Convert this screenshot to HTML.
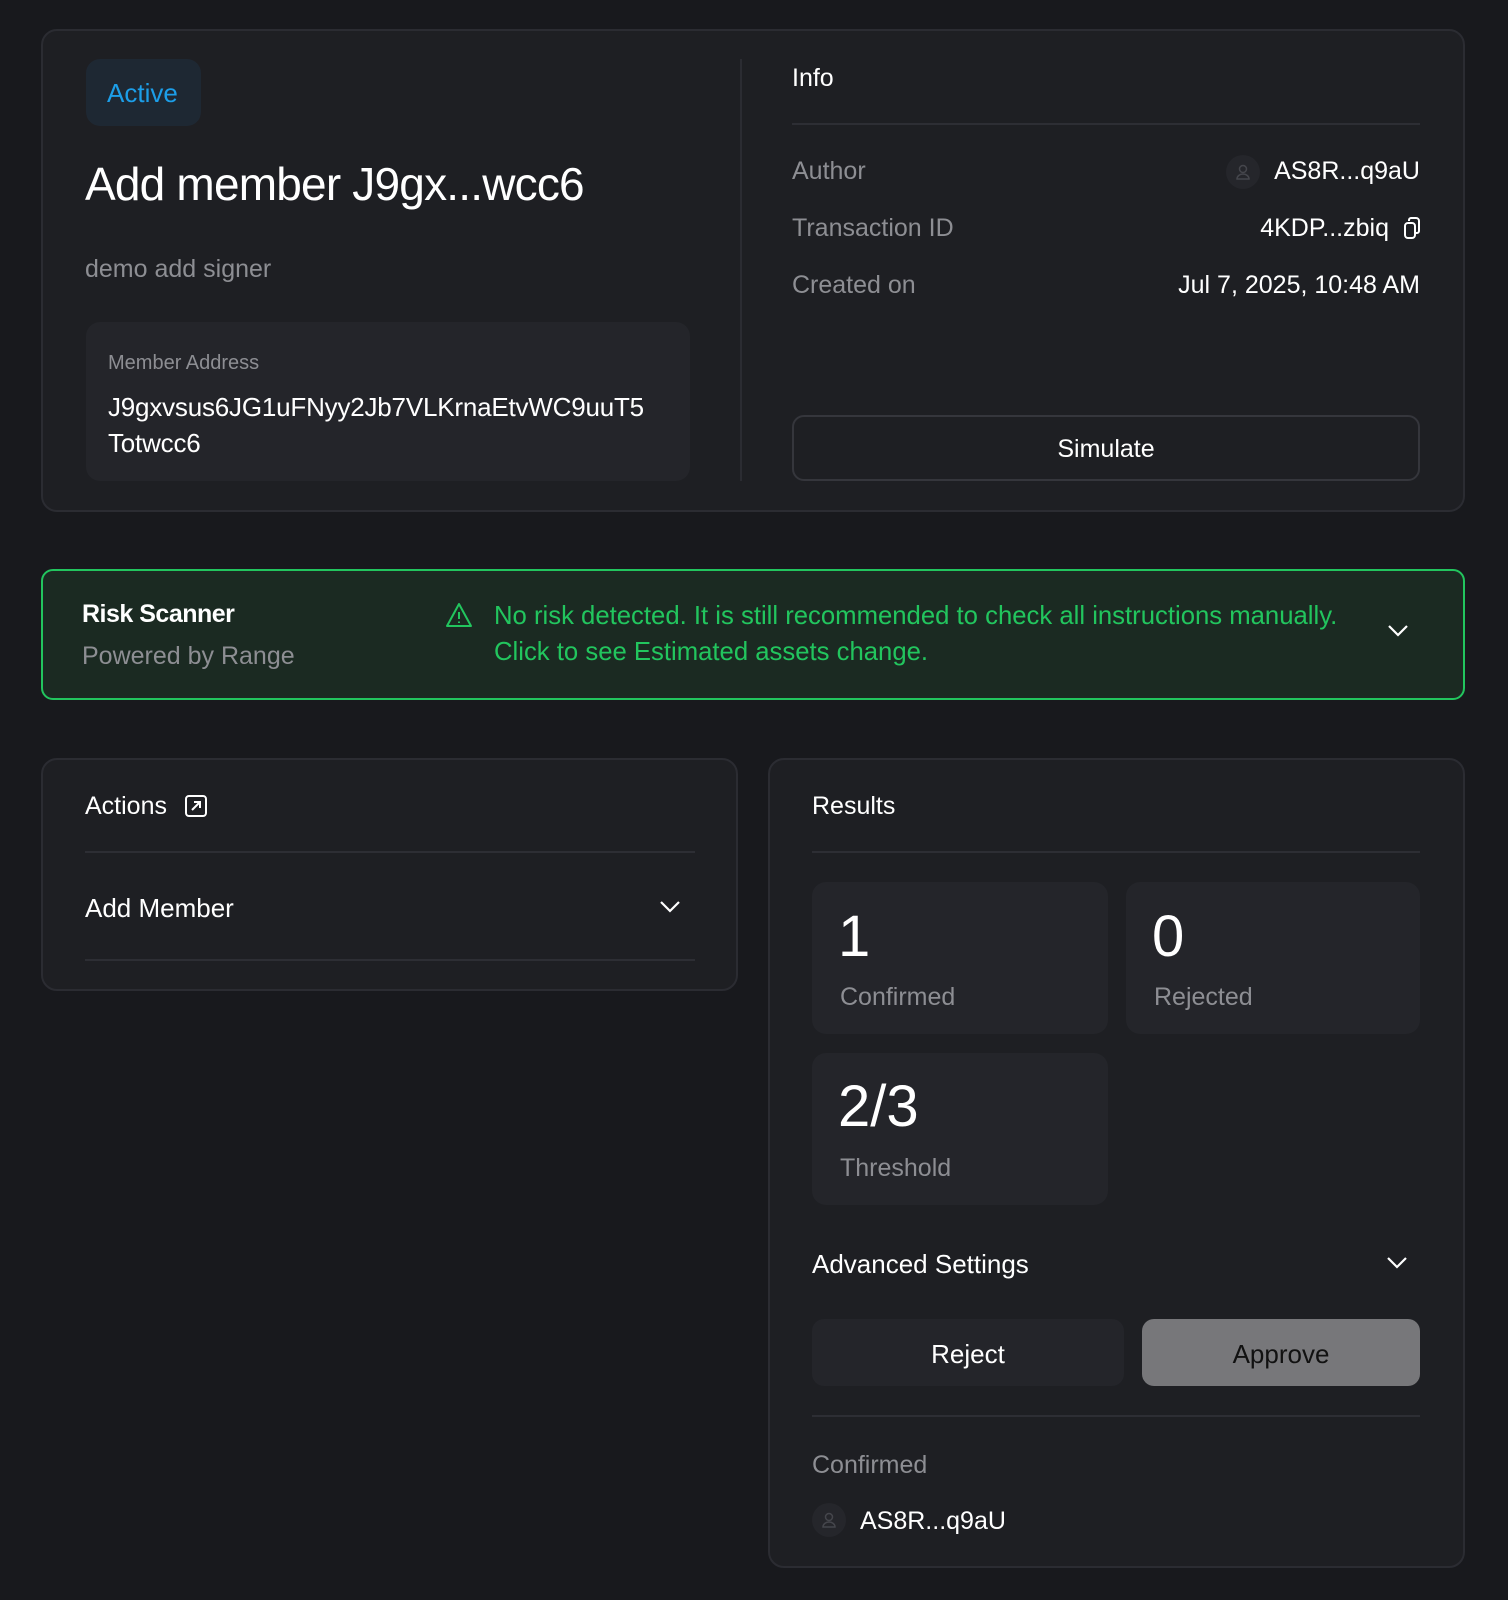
<!DOCTYPE html>
<html><head><meta charset="utf-8"><style>
*{box-sizing:border-box;margin:0;padding:0}
body{width:1508px;height:1600px;background:#18191d;font-family:"Liberation Sans",sans-serif;color:#fff;position:relative;overflow:hidden}
.abs{position:absolute}
.card{position:absolute;background:#1e1f23;border:2px solid #2b2c32;border-radius:16px}
.t{position:absolute;white-space:nowrap}
.grey{color:#8d8e93}
.box{position:absolute;background:#24252a;border-radius:14px}
.line{position:absolute;height:2px;background:#2d2e34}
</style></head><body>

<div class="card" style="left:41px;top:29px;width:1424px;height:483px"></div>
<div class="box" style="left:86px;top:59px;width:115px;height:67px;background:#1e2833"></div>
<div class="t" style="left:107px;top:78px;font-size:26px;color:#1c9ee8">Active</div>
<div class="t" style="left:85px;top:157px;font-size:46px;letter-spacing:-0.8px">Add member J9gx...wcc6</div>
<div class="t grey" style="left:85px;top:255px;font-size:25px">demo add signer</div>
<div class="box" style="left:86px;top:322px;width:604px;height:159px"></div>
<div class="t grey" style="left:108px;top:352px;font-size:20px">Member Address</div>
<div class="t" style="left:108px;top:389px;font-size:26px;line-height:36px;letter-spacing:-0.2px;font-weight:500">J9gxvsus6JG1uFNyy2Jb7VLKrnaEtvWC9uuT5<br>Totwcc6</div>
<div class="abs" style="left:740px;top:59px;width:2px;height:422px;background:#2b2c32"></div>
<div class="t" style="left:792px;top:64px;font-size:25px">Info</div>
<div class="line" style="left:792px;top:123px;width:628px"></div>
<div class="t grey" style="left:792px;top:157px;font-size:25px">Author</div>
<div class="t grey" style="left:792px;top:214px;font-size:25px">Transaction ID</div>
<div class="t grey" style="left:792px;top:271px;font-size:25px">Created on</div>
<div class="abs" style="left:1226px;top:155px;width:34px;height:34px;border-radius:50%;background:#25262b"></div>
<svg class="abs" style="left:1233px;top:162px" width="20" height="20" viewBox="0 0 20 20" fill="none" stroke="#45464c" stroke-width="1.5"><circle cx="10" cy="7" r="3.5"/><path d="M4 17c0-3 3-5 6-5s6 2 6 5z"/></svg>
<div class="t" style="right:88px;top:157px;font-size:25px">AS8R...q9aU</div>
<div class="t" style="right:119px;top:214px;font-size:25px">4KDP...zbiq</div>
<svg class="abs" style="left:1402px;top:216px" width="20" height="24" viewBox="0 0 20 24" fill="none" stroke="#fff" stroke-width="2"><rect x="3" y="7" width="10" height="15" rx="3"/><path d="M7 5V4a2 2 0 0 1 2-2h5a3 3 0 0 1 3 3v10a2 2 0 0 1-2 2h-1"/></svg>
<div class="t" style="right:88px;top:271px;font-size:25px">Jul 7, 2025, 10:48 AM</div>
<div class="abs" style="left:792px;top:415px;width:628px;height:66px;border:2px solid #35363c;border-radius:12px"></div>
<div class="t" style="left:792px;width:628px;text-align:center;top:435px;font-size:25px;font-weight:500">Simulate</div>

<div class="abs" style="left:41px;top:569px;width:1424px;height:131px;border:2px solid #22c55e;border-radius:12px;background:#1b2a22"></div>
<div class="t" style="left:82px;top:600px;font-size:25px;font-weight:bold;letter-spacing:-0.5px">Risk Scanner</div>
<div class="t grey" style="left:82px;top:642px;font-size:25px">Powered by Range</div>
<svg class="abs" style="left:445px;top:602px" width="28" height="26" viewBox="0 0 28 26" fill="none" stroke="#22c55e" stroke-width="2"><path d="M14 2L26 24H2Z" stroke-linejoin="round"/><path d="M14 10v7M14 19.5v1.5"/></svg>
<div class="t" style="left:494px;top:598px;font-size:25.7px;color:#22c55e;line-height:36px">No risk detected. It is still recommended to check all instructions manually.<br>Click to see Estimated assets change.</div>
<svg class="abs" style="left:1387px;top:624px" width="22" height="14" viewBox="0 0 22 14" fill="none" stroke="#fff" stroke-width="2.2"><path d="M2 2l9 9 9-9"/></svg>

<div class="card" style="left:41px;top:758px;width:697px;height:233px"></div>
<div class="t" style="left:85px;top:792px;font-size:25px">Actions</div>
<svg class="abs" style="left:184px;top:794px" width="24" height="24" viewBox="0 0 24 24" fill="none" stroke="#fff" stroke-width="2"><rect x="2" y="2" width="20" height="20" rx="3"/><path d="M8 16l8-8M10 8h6v6"/></svg>
<div class="line" style="left:85px;top:851px;width:610px"></div>
<div class="t" style="left:85px;top:893px;font-size:26px">Add Member</div>
<svg class="abs" style="left:659px;top:900px" width="22" height="14" viewBox="0 0 22 14" fill="none" stroke="#fff" stroke-width="2.2"><path d="M2 2l9 9 9-9"/></svg>
<div class="line" style="left:85px;top:959px;width:610px"></div>

<div class="card" style="left:768px;top:758px;width:697px;height:810px"></div>
<div class="t" style="left:812px;top:792px;font-size:25px">Results</div>
<div class="line" style="left:812px;top:851px;width:608px"></div>
<div class="box" style="left:812px;top:882px;width:296px;height:152px"></div>
<div class="box" style="left:1126px;top:882px;width:294px;height:152px"></div>
<div class="box" style="left:812px;top:1053px;width:296px;height:152px"></div>
<div class="t" style="left:838px;top:903px;font-size:58px;font-weight:500">1</div>
<div class="t grey" style="left:840px;top:983px;font-size:25px">Confirmed</div>
<div class="t" style="left:1152px;top:903px;font-size:58px;font-weight:500">0</div>
<div class="t grey" style="left:1154px;top:983px;font-size:25px">Rejected</div>
<div class="t" style="left:838px;top:1073px;font-size:58px;font-weight:500">2/3</div>
<div class="t grey" style="left:840px;top:1154px;font-size:25px">Threshold</div>
<div class="t" style="left:812px;top:1249px;font-size:26px">Advanced Settings</div>
<svg class="abs" style="left:1386px;top:1256px" width="22" height="14" viewBox="0 0 22 14" fill="none" stroke="#fff" stroke-width="2.2"><path d="M2 2l9 9 9-9"/></svg>
<div class="box" style="left:812px;top:1319px;width:312px;height:67px;border-radius:12px"></div>
<div class="t" style="left:812px;width:312px;text-align:center;top:1339px;font-size:26px;font-weight:500">Reject</div>
<div class="box" style="left:1142px;top:1319px;width:278px;height:67px;border-radius:12px;background:#77777a"></div>
<div class="t" style="left:1142px;width:278px;text-align:center;top:1339px;font-size:26px;color:#111">Approve</div>
<div class="line" style="left:812px;top:1415px;width:608px"></div>
<div class="t grey" style="left:812px;top:1451px;font-size:25px">Confirmed</div>
<div class="abs" style="left:812px;top:1503px;width:34px;height:34px;border-radius:50%;background:#25262b"></div>
<svg class="abs" style="left:819px;top:1510px" width="20" height="20" viewBox="0 0 20 20" fill="none" stroke="#45464c" stroke-width="1.5"><circle cx="10" cy="7" r="3.5"/><path d="M4 17c0-3 3-5 6-5s6 2 6 5z"/></svg>
<div class="t" style="left:860px;top:1507px;font-size:25px">AS8R...q9aU</div>
</body></html>
